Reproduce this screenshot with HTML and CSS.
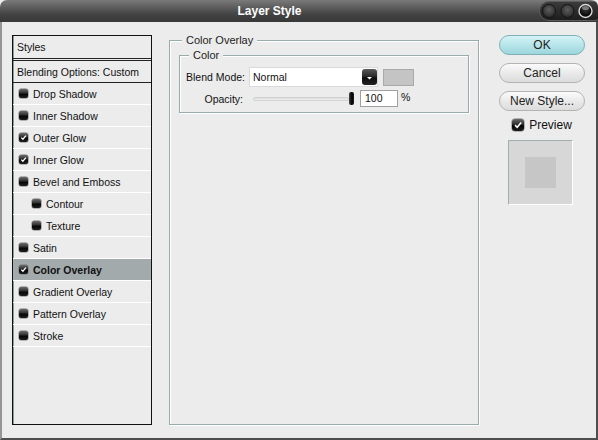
FILE: index.html
```html
<!DOCTYPE html>
<html>
<head>
<meta charset="utf-8">
<link rel="stylesheet" href="styles.css">
</head>
<body>
<div class="win">
  <div class="titlebar">
    <div class="title">Layer Style</div>
    <svg class="ctrls" width="59" height="20" viewBox="0 0 59 20">
      <defs>
        <linearGradient id="pillg" x1="0" y1="0" x2="0" y2="1">
          <stop offset="0" stop-color="#3c3c3c"/>
          <stop offset="1" stop-color="#1c1c1c"/>
        </linearGradient>
        <radialGradient id="orbg" cx="50%" cy="40%" r="60%">
          <stop offset="0" stop-color="#5e5e5e"/>
          <stop offset="1" stop-color="#2a2a2a"/>
        </radialGradient>
        <radialGradient id="hotg" cx="50%" cy="35%" r="55%">
          <stop offset="0" stop-color="#3a3a3a"/>
          <stop offset="1" stop-color="#050505"/>
        </radialGradient>
      </defs>
      <rect x="0.5" y="0.5" width="64" height="19" rx="9.5" fill="url(#pillg)" stroke="#5c5c5c"/>
      <circle cx="10" cy="10" r="6.5" fill="url(#orbg)" stroke="#151515"/>
      <circle cx="28.5" cy="10" r="6.5" fill="url(#orbg)" stroke="#151515"/>
      <circle cx="46.5" cy="10" r="6.5" fill="url(#hotg)" stroke="#d8d8d8" stroke-width="1.4"/>
      <ellipse cx="46.5" cy="7" rx="3.5" ry="2" fill="#9a9a9a" opacity="0.7"/>
    </svg>
  </div>
  <div class="body">
    <div class="list">
      <div class="row head">Styles</div>
      <div class="row blend">Blending Options: Custom</div>
      <div class="row"><span class="cb"></span>Drop Shadow</div>
      <div class="row"><span class="cb"></span>Inner Shadow</div>
      <div class="row"><span class="cb"><svg viewBox="0 0 9 9" width="9" height="9"><path d="M2.2 4.6 L3.9 6.2 L6.9 2.6" fill="none" stroke="#fff" stroke-width="1.3"/></svg></span>Outer Glow</div>
      <div class="row"><span class="cb"><svg viewBox="0 0 9 9" width="9" height="9"><path d="M2.2 4.6 L3.9 6.2 L6.9 2.6" fill="none" stroke="#fff" stroke-width="1.3"/></svg></span>Inner Glow</div>
      <div class="row"><span class="cb"></span>Bevel and Emboss</div>
      <div class="row sub"><span class="cb"></span>Contour</div>
      <div class="row sub"><span class="cb"></span>Texture</div>
      <div class="row"><span class="cb"></span>Satin</div>
      <div class="row sel"><span class="cb"><svg viewBox="0 0 9 9" width="9" height="9"><path d="M2.2 4.6 L3.9 6.2 L6.9 2.6" fill="none" stroke="#fff" stroke-width="1.3"/></svg></span>Color Overlay</div>
      <div class="row"><span class="cb"></span>Gradient Overlay</div>
      <div class="row"><span class="cb"></span>Pattern Overlay</div>
      <div class="row"><span class="cb"></span>Stroke</div>
    </div>

    <fieldset class="group outer">
      <legend>Color Overlay</legend>
      <fieldset class="group inner">
        <legend>Color</legend>
        <div class="field">
          <span class="lbl">Blend Mode:</span>
          <div class="select">
            <span>Normal</span>
            <span class="arrow"><svg viewBox="0 0 15 16" width="15" height="16"><path d="M5 8 L10 8 L7.5 10.5 Z" fill="#fff"/></svg></span>
          </div>
          <span class="swatch"></span>
        </div>
        <div class="field f2">
          <span class="lbl op">Opacity:</span>
          <div class="slider"><span class="track"></span><span class="thumb"></span></div>
          <span class="num">100</span>
          <span class="pct">%</span>
        </div>
      </fieldset>
    </fieldset>

    <div class="side">
      <div class="btn ok">OK</div>
      <div class="btn">Cancel</div>
      <div class="btn">New Style...</div>
      <div class="prev">
        <span class="cb big"><svg viewBox="0 0 12 12" width="12" height="12"><path d="M3 6.2 L5.2 8.3 L9.2 3.6" fill="none" stroke="#fff" stroke-width="1.6"/></svg></span>
        <span>Preview</span>
      </div>
      <div class="pbox"><span class="psq"></span></div>
    </div>
  </div>
</div>
</body>
</html>
```
FILE: styles.css
```css
* { box-sizing: border-box; }
html, body { margin: 0; padding: 0; background: #ececec; }
body {
  font-family: "Liberation Sans", Arial, sans-serif;
  font-size: 10.5px;
  color: #111;
}
.win {
  width: 598px;
  height: 440px;
  display: flex;
  flex-direction: column;
  overflow: hidden;
}
.titlebar {
  height: 22px;
  flex: none;
  display: flex;
  align-items: flex-start;
  border-radius: 7px 7px 0 0;
  background: linear-gradient(#7a7a7a, #5c5c5c 35%, #434343 65%, #383838);
  overflow: hidden;
}
.title {
  flex: 1;
  text-align: center;
  color: #fff;
  font-weight: bold;
  font-size: 12px;
  line-height: 22px;
}
.ctrls { flex: none; margin-top: 1px; display: block; }

.body {
  flex: 1;
  display: flex;
  align-items: flex-start;
  padding: 13px 0 0 10px;
  border-left: 2px solid #959595;
  border-right: 2px solid #4e4e4e;
  border-bottom: 2px solid #4e4e4e;
}

/* style list */
.list {
  flex: none;
  width: 140px;
  height: 390px;
  border: 1px solid #111;
  box-shadow: inset 1px 0 #8a9d9d;
}
.row {
  height: 22px;
  display: flex;
  align-items: center;
  gap: 5px;
  padding-left: 6px;
  border-bottom: 1px solid #fff;
  white-space: nowrap;
}
.row.head { height: 25px; padding-left: 4px; border-bottom: 3px double #222; }
.row.blend { padding-left: 4px; border-bottom: 1px solid #222; }
.row.sub { padding-left: 19px; }
.row.sel { background: #a3aaab; font-weight: bold; }

.cb {
  flex: none;
  width: 9px;
  height: 9px;
  border-radius: 2px;
  background: linear-gradient(#6a6a6a, #2e2e2e 45%, #050505 55%, #1e1e1e);
  box-shadow: 0 0 0 0.5px #777;
  display: flex;
}
.cb svg { display: block; }
.cb.big { width: 12px; height: 12px; border-radius: 3px; }

/* group boxes */
.group {
  margin: 0;
  min-width: 0;
  border: 1px solid #9aabab;
  box-shadow: 1px 1px 0 #fff, inset 1px 1px 0 #fff;
}
.group legend {
  padding: 0 4px;
  line-height: 13px;
  font-size: 11px;
  color: #222;
  background: #ececec;
}
.outer {
  flex: none;
  width: 310px;
  height: 391px;
  margin: -1px 0 0 17px;
  padding: 2px 9px 0;
}
.outer > legend { margin-left: 3px; }
.inner { padding: 5px 0 5px; }
.inner > legend { margin-left: 9px; }

.field { display: flex; align-items: center; }
.f2 { margin-top: 3px; }
.lbl { width: 65px; text-align: right; margin-right: 4px; flex: none; }
.lbl.op { padding-right: 2px; }

.select {
  width: 129px;
  height: 20px;
  background: #fff;
  border: 1px solid #dadada;
  display: flex;
  align-items: center;
  padding-left: 3px;
}
.arrow {
  margin-left: auto;
  margin-right: 0;
  width: 15px;
  height: 16px;
  border-radius: 3px;
  background: linear-gradient(#5a5a5a, #2a2a2a 45%, #0e0e0e 55%, #222);
  display: flex;
}
.arrow svg { display: block; }
.swatch {
  margin-left: 5px;
  width: 31px;
  height: 17px;
  background: #c4c4c4;
  border: 1px solid #a9a9a9;
}

.slider {
  margin-left: 4px;
  width: 102px;
  height: 17px;
  display: flex;
  align-items: center;
}
.track {
  width: 96px;
  height: 4px;
  background: linear-gradient(#d6d6d6, #f4f4f4);
  border: 1px solid #d2d2d2;
  border-radius: 2px;
}
.thumb {
  width: 5px;
  height: 13px;
  border-radius: 2px;
  background: linear-gradient(90deg, #444, #000 60%, #222);
}
.num {
  margin-left: 5px;
  width: 38px;
  height: 17px;
  background: #fff;
  border: 1px solid #a0a0a0;
  padding-left: 4px;
  line-height: 15px;
}
.pct { margin-left: 3px; margin-top: -3px; }

/* side buttons */
.side {
  flex: none;
  width: 86px;
  margin-left: 20px;
  display: flex;
  flex-direction: column;
  align-items: center;
}
.btn {
  width: 86px;
  height: 20px;
  margin-bottom: 8px;
  border-radius: 10px;
  border: 1px solid #b3b3b3;
  background: linear-gradient(#fbfbfb, #eaeaea 50%, #dcdcdc);
  font-size: 12px;
  color: #222;
  display: flex;
  align-items: center;
  justify-content: center;
}
.btn.ok {
  border-color: #7eb1b7;
  background: linear-gradient(#d4f3f6, #b6e5ea 50%, #9dd5dc);
}
.prev {
  margin-top: -1px;
  display: flex;
  align-items: center;
  gap: 5px;
  font-size: 12px;
  height: 14px;
}
.pbox {
  margin-top: 8px;
  margin-left: -3px;
  width: 65px;
  height: 65px;
  border: 1px solid;
  border-color: #9db0b0 #fff #fff #9db0b0;
  background: #d7d7d7;
  display: flex;
  align-items: center;
  justify-content: center;
}
.psq { width: 31px; height: 31px; background: #c6c6c6; }
```
